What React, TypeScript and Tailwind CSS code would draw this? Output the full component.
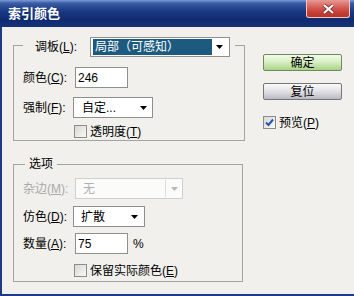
import React from "react";

const FONT = "font-['Liberation_Sans','Noto_Sans_CJK_SC',sans-serif]";

function Arrow({ color = "#000" }: { color?: string }) {
  return (
    <svg width="7" height="4" viewBox="0 0 7 4">
      <polygon points="0,0 7,0 3.5,4" fill={color} />
    </svg>
  );
}

function Checkbox({ checked = false }: { checked?: boolean }) {
  return (
    <div className="w-[13px] h-[13px] border border-[#8a8c8e] bg-gradient-to-br from-[#d8d8d4] to-[#f8f8f6] flex items-center justify-center shrink-0">
      {checked && (
        <svg width="9" height="9" viewBox="0 0 9 9">
          <path d="M1 4.5 L3.5 7 L8 1.5" stroke="#2d4fb0" strokeWidth="2" fill="none" />
        </svg>
      )}
    </div>
  );
}

export default function App() {
  return (
    <div className={`w-[354px] h-[296px] flex flex-col bg-[#f1f0ed] text-[12px] text-black overflow-hidden ${FONT}`}>
      {/* Title bar */}
      <div className="h-[27px] flex items-start bg-[linear-gradient(to_bottom,#7b9ad6_0%,#3a5ca5_12%,#1b3a84_40%,#0f2a70_75%,#15337a_100%)]">
        <span className="flex-1 pl-[8px] pt-[5px] text-white font-bold text-[13px] leading-[17px]">索引颜色</span>
        <div className="mr-[4px] w-[44px] shrink-0 h-[18px] rounded-b-[3px] border border-t-0 border-[#f0c8c4] bg-[linear-gradient(to_bottom,#e79b93_0%,#d6615a_40%,#c43d33_75%,#b8342c_100%)] flex items-center justify-center">
          <svg width="13" height="10" viewBox="0 0 13 10">
            <path d="M2 1 L11 9 M11 1 L2 9" stroke="#7a2020" strokeWidth="3.6" />
            <path d="M2 1 L11 9 M11 1 L2 9" stroke="#ffffff" strokeWidth="2.2" />
          </svg>
        </div>
      </div>

      {/* Body */}
      <div className="flex-1 flex border-l-2 border-b-2 border-[#1c3a86] pl-[11px] pt-[6px]">
        {/* Left column */}
        <div className="w-[230px] flex flex-col">
          {/* Group 1 */}
          <fieldset className="w-[230px] border border-[#a3a3a3] px-[9px] pb-[2px]">
            <legend className="pt-[4px] pl-[12px] pr-[5px]">
              <div className="flex items-center h-[20px]">
                <span className="w-[55px] whitespace-nowrap">
                  调板(<u>L</u>):
                </span>
                <div className="w-[140px] h-[20px] border border-[#8e8f8f] bg-white flex items-center p-[2px]">
                  <div className="w-[119px] h-[16px] bg-[#1d5a80] text-white flex items-center pl-[2px] whitespace-nowrap">
                    局部（可感知）
                  </div>
                  <div className="flex-1 flex items-center justify-center">
                    <Arrow />
                  </div>
                </div>
              </div>
            </legend>
            <div className="mt-[10px] flex items-center h-[21px]">
              <span className="w-[52px] whitespace-nowrap">
                颜色(<u>C</u>):
              </span>
              <div className="w-[53px] h-[21px] border border-[#8e8f8f] bg-white flex items-center pl-[2px]">246</div>
            </div>
            <div className="mt-[9px] flex items-center h-[21px]">
              <span className="w-[50px] whitespace-nowrap">
                强制(<u>F</u>):
              </span>
              <div className="w-[80px] h-[21px] border border-[#8e8f8f] bg-white flex items-center justify-between pl-[8px] pr-[5px]">
                <span>自定...</span>
                <Arrow />
              </div>
            </div>
            <div className="mt-[7px] flex items-center h-[13px] pl-[51px] gap-[3px]">
              <Checkbox />
              <span className="whitespace-nowrap">
                透明度(<u>T</u>)
              </span>
            </div>
          </fieldset>

          {/* Group 2 */}
          <fieldset className="mt-[15px] w-[230px] border border-[#a3a3a3] px-[9px] pb-[4px]">
            <legend className="ml-[2px] px-[4px] h-[16px] leading-[16px]">选项</legend>
            <div className="mt-[6px] flex items-center h-[21px]">
              <span className="w-[52px] whitespace-nowrap text-[#a8a8a8]">
                杂边(<u>M</u>):
              </span>
              <div className="w-[108px] h-[21px] border border-[#cfcfcf] bg-[#fbfbfa] flex items-center">
                <span className="flex-1 pl-[7px] text-[#b0b0b0]">无</span>
                <div className="w-[17px] h-[17px] border-l border-[#dcdcdc] flex items-center justify-center">
                  <Arrow color="#b8b8b8" />
                </div>
              </div>
            </div>
            <div className="mt-[7px] flex items-center h-[21px]">
              <span className="w-[50px] whitespace-nowrap">
                仿色(<u>D</u>):
              </span>
              <div className="w-[72px] h-[21px] border border-[#8e8f8f] bg-white flex items-center justify-between pl-[7px] pr-[6px]">
                <span>扩散</span>
                <Arrow />
              </div>
            </div>
            <div className="mt-[6px] flex items-center h-[21px]">
              <span className="w-[52px] whitespace-nowrap">
                数量(<u>A</u>):
              </span>
              <div className="w-[53px] h-[21px] border border-[#8e8f8f] bg-white flex items-center pl-[2px]">75</div>
              <span className="ml-[5px]">%</span>
            </div>
            <div className="mt-[10px] flex items-center h-[13px] pl-[51px] gap-[3px]">
              <Checkbox />
              <span className="whitespace-nowrap">
                保留实际颜色(<u>E</u>)
              </span>
            </div>
          </fieldset>
        </div>

        {/* Right column */}
        <div className="ml-[20px] pt-[21px] w-[79px] flex flex-col">
          <div className="h-[17px] rounded-[2px] border border-[#6f8a60] bg-[linear-gradient(to_bottom,#f2fbea_0%,#d9f0c4_45%,#a9d386_100%)] flex items-center justify-center">
            确定
          </div>
          <div className="mt-[12px] h-[17px] rounded-[2px] border border-[#76767c] bg-[linear-gradient(to_bottom,#fafafa_0%,#e4e4e8_45%,#b9b9c2_100%)] flex items-center justify-center">
            复位
          </div>
          <div className="mt-[16px] flex items-center h-[13px] gap-[3px]">
            <Checkbox checked />
            <span className="whitespace-nowrap">
              预览(<u>P</u>)
            </span>
          </div>
        </div>
      </div>
    </div>
  );
}
